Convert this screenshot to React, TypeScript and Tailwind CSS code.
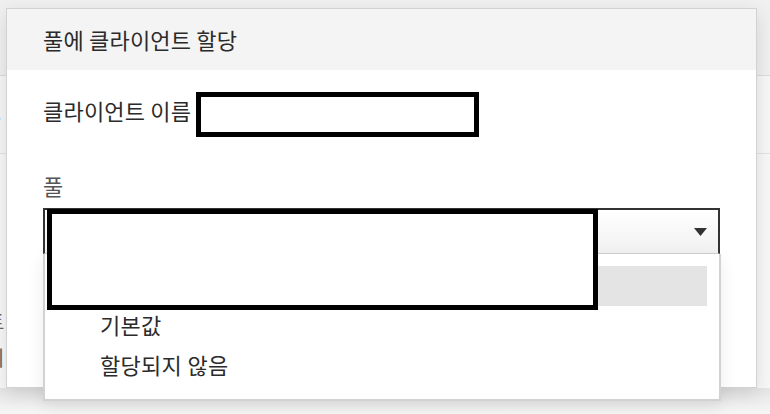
import React from "react";

const font = { fontFamily: '"Noto Sans CJK KR", "Noto Sans", sans-serif' };

export default function App() {
  return (
    <div
      className="relative w-[770px] h-[414px] overflow-hidden bg-[#f4f4f4]"
      style={font}
    >
      {/* background page */}
      <div className="flex flex-col w-full h-full">
        <div className="h-[76px] bg-[#f0f0f0] border-b border-[#dcdcdc]" />
        <div className="h-[78px] bg-[#f7f7f7] border-b border-[#e2e2e2] flex items-center">
          <span className="ml-[-10px] text-[20px] text-[#555]">3</span>
        </div>
        <div className="flex-1 bg-[#f8f8f8] flex flex-col pt-[150px]">
          <span className="ml-[-14px] text-[20px] leading-[36px] text-[#666]">트</span>
          <span className="ml-[-14px] text-[20px] leading-[36px] text-[#666]">이</span>
        </div>
        <div className="h-[26px] bg-gradient-to-b from-[#e6e6e6] to-[#f6f6f6]" />
      </div>

      {/* modal */}
      <div className="absolute left-[6px] top-[8px] w-[751px] h-[380px] bg-white border border-[#d2d2d2] shadow-[0_6px_18px_rgba(0,0,0,0.12)] flex flex-col">
        <div className="h-[61px] bg-[#f4f4f4] flex items-center pl-[36px] pb-[2px]">
          <span className="text-[22px] text-[#2b2b2b] leading-[30px] tracking-[0.2px]">풀에 클라이언트 할당</span>
        </div>
        <div className="flex flex-col pl-[36px] pt-[22px]">
          <div className="flex items-start">
            <span className="mt-[3px] text-[22px] leading-[30px] text-[#2b2b2b] tracking-[0.2px]">클라이언트 이름</span>
            <span className="ml-[5px] w-[283px] h-[45px] border-[5px] border-black bg-white" />
          </div>
          <span className="mt-[33px] text-[22px] leading-[30px] text-[#555]">풀</span>
          <div className="relative mt-[8px] w-[677px]">
            <div className="h-[46px] border-t-2 border-x-2 border-[#333] border-b border-b-[#cfcfcf] bg-gradient-to-b from-[#ffffff] to-[#f1f1f1] flex items-center justify-end pr-[11px]">
              <svg width="13" height="8" viewBox="0 0 13 8">
                <polygon points="0,0 13,0 6.5,8" fill="#333" />
              </svg>
            </div>
            {/* dropdown menu */}
            <div className="absolute left-0 top-[46px] w-[678px] h-[147px] bg-white border-2 border-t-0 border-[#d2d2d2] shadow-[0_6px_16px_rgba(0,0,0,0.08)] flex flex-col px-[12px] pt-[12px]">
              <div className="h-[40px] bg-[#e4e4e4]" />
              <div className="h-[40px] flex items-center pl-[43px] pb-[4px] text-[22px] text-[#2b2b2b] tracking-[0.3px]">기본값</div>
              <div className="h-[40px] flex items-center pl-[43px] pb-[4px] text-[22px] text-[#2b2b2b] tracking-[0.3px]">할당되지 않음</div>
            </div>
            {/* redaction box */}
            <div className="absolute left-[4px] top-[1px] w-[551px] h-[101px] border-[5px] border-black bg-white" />
          </div>
        </div>
      </div>
    </div>
  );
}
